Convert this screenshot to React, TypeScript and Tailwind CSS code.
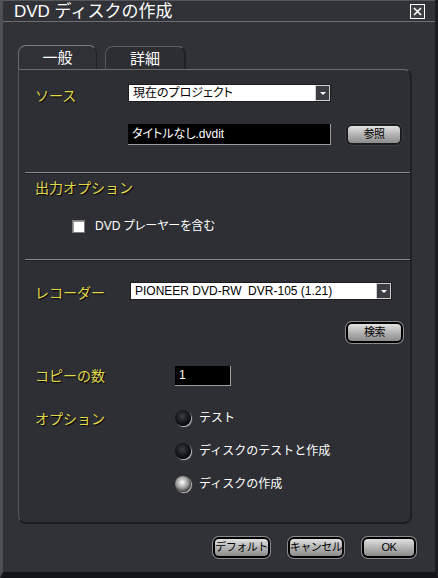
import React from "react";

function Label({ children }: { children: React.ReactNode }) {
  return (
    <span className="text-[14px] leading-none text-[#e2d84c] [text-shadow:1px_1px_1px_#000] whitespace-nowrap">
      {children}
    </span>
  );
}

function Dropdown({ text, width }: { text: string; width: string }) {
  return (
    <div className={`${width} h-[18px] flex bg-white border border-[#1c1c1c]`}>
      <span className="flex-1 pl-[4px] text-[12px] leading-[16px] text-black [font-feature-settings:'palt'] whitespace-pre overflow-hidden">
        {text}
      </span>
      <span className="w-[15px] h-[16px] bg-[#3c3d41] border border-[#d0d0d0] flex items-center justify-center">
        <span className="w-0 h-0 border-l-[3px] border-r-[3px] border-t-[3px] border-l-transparent border-r-transparent border-t-white" />
      </span>
    </div>
  );
}

function Btn({ children, width, soft }: { children: React.ReactNode; width: string; soft?: boolean }) {
  return (
    <div
      className={`${width} h-[21px] rounded-[6px] p-[2px] ${soft ? "bg-[#1c1d20] shadow-[0_0_0_1px_#3a3c40]" : "bg-black shadow-[0_0_0_1px_#8a8c90]"}`}
    >
      <div className="h-full rounded-[4px] bg-gradient-to-b from-[#e2e2e2] via-[#b4b4b4] to-[#8c8c8c] flex items-center justify-center text-[11px] leading-none text-black tracking-[-0.5px] whitespace-nowrap">
        {children}
      </div>
    </div>
  );
}

function Radio({ on, text }: { on?: boolean; text: string }) {
  return (
    <div className="flex items-center gap-[8px] h-[16px]">
      <span
        className={`w-[16px] h-[16px] rounded-full shadow-[1px_1px_1px_#c8c8c8] ${on ? "bg-[radial-gradient(circle_at_45%_40%,#ffffff,#9a9a9a_45%,#2a2a2a_80%)]" : "bg-[radial-gradient(circle_at_45%_40%,#3c3e42,#111214_55%,#050505_80%)]"}`}
      />
      <span className="text-[12px] leading-none text-white whitespace-nowrap">{text}</span>
    </div>
  );
}

export default function App() {
  return (
    <div className="w-[438px] h-[578px] bg-[#303237] overflow-hidden flex flex-col border-l-[3px] border-l-[#4e5055] border-r-[3px] border-r-[#1c1d20] border-b-[6px] border-b-[#141518] font-['Liberation_Sans','Noto_Sans_CJK_JP',sans-serif]">

      {/* TITLE */}
      <div className="h-[22px] shrink-0 flex items-center justify-between pl-[11px] pr-[10px] border-b border-b-[#6c6e73] border-t border-t-[#55575c]">
        <span className="text-[17px] leading-none text-white">DVD ディスクの作成</span>
        <span className="w-[15px] h-[15px] border border-white bg-[#3d3f43] flex items-center justify-center">
          <svg width="9" height="9" viewBox="0 0 9 9">
            <path d="M1 1 L8 8 M8 1 L1 8" stroke="#fff" strokeWidth="1.6" />
          </svg>
        </span>
      </div>

      {/* TABS */}
      <div className="mt-[23px] pl-[15px] flex gap-[8px] items-end h-[24px]">
        <div className="w-[79px] h-[24px] rounded-t-[8px] border-t border-l border-t-[#7a7c80] border-l-[#6a6c70] border-r border-r-[#1e2023] bg-[#2f3136] flex items-center justify-center text-[15px] text-white leading-none">
          一般
        </div>
        <div className="w-[81px] h-[23px] rounded-t-[8px] border-t border-l border-t-[#5e6065] border-l-[#55575c] border-r-2 border-r-[#1e2023] bg-[#2c2e32] flex items-center justify-center text-[15px] text-white leading-none">
          詳細
        </div>
      </div>

      {/* PANEL */}
      <div className="ml-[15px] w-[394px] h-[455px] rounded-[8px] rounded-tl-none bg-[#2d2f34] border border-t-[#6a6c70] border-l-[#55575c] border-r-2 border-r-[#1f2024] border-b-2 border-b-[#1c1d21] flex flex-col">

        {/* SOURCE */}
        <div className="mt-[14px] pl-[16px] flex items-center h-[18px]">
          <div className="w-[93px] pt-[6px]"><Label>ソース</Label></div>
          <Dropdown text="現在のプロジェクト" width="w-[203px]" />
        </div>

        <div className="mt-[21px] pl-[109px] flex items-center h-[22px]">
          <div className="w-[203px] h-[21px] bg-black border-b border-r border-b-[#9a9a9a] border-r-[#9a9a9a] flex items-center pl-[4px] text-[12px] text-white [font-feature-settings:'palt'] leading-none">
            タイトルなし.dvdit
          </div>
          <div className="ml-[15px]">
            <Btn width="w-[56px]" soft>参照</Btn>
          </div>
        </div>

        <div className="mt-[27px] ml-[6px] border-t border-t-[#85878c] border-b border-b-[#1e2023]" />

        {/* OUTPUT */}
        <div className="mt-[6px] pl-[16px] h-[16px] flex items-center">
          <Label>出力オプション</Label>
        </div>

        <div className="mt-[23px] pl-[53px] flex items-center gap-[10px] h-[14px]">
          <span className="w-[13px] h-[13px] bg-white border border-[#7c7c7c] shadow-[inset_1px_1px_0_#9a9a9a]" />
          <span className="text-[12px] leading-none text-white whitespace-nowrap [font-feature-settings:'palt']">DVD プレーヤーを含む</span>
        </div>

        <div className="mt-[26px] ml-[6px] border-t border-t-[#85878c] border-b border-b-[#1e2023]" />

        {/* RECORDER */}
        <div className="mt-[21px] pl-[16px] flex items-center h-[18px]">
          <div className="w-[95px] pt-[4px]"><Label>レコーダー</Label></div>
          <Dropdown text="PIONEER DVD-RW  DVR-105 (1.21)" width="w-[262px]" />
        </div>

        <div className="mt-[21px] pl-[327px] h-[23px] flex items-center">
          <Btn width="w-[57px]">検索</Btn>
        </div>

        <div className="mt-[21px] pl-[16px] flex items-center h-[21px]">
          <div className="w-[140px] pt-[1px]"><Label>コピーの数</Label></div>
          <div className="w-[56px] h-[20px] bg-black border-b border-r border-b-[#a0a0a0] border-r-[#a0a0a0] flex items-center pl-[4px] text-[12px] text-white leading-none">
            1
          </div>
        </div>

        {/* OPTIONS */}
        <div className="mt-[21px] pl-[16px] flex">
          <div className="w-[140px]"><Label>オプション</Label></div>
          <div className="pt-[3px] flex flex-col gap-[17px]">
            <Radio text="テスト" />
            <Radio text="ディスクのテストと作成" />
            <Radio text="ディスクの作成" on />
          </div>
        </div>
      </div>

      {/* FOOTER */}
      <div className="mt-[13px] flex justify-end gap-[18px] pr-[19px]">
        <Btn width="w-[57px]">デフォルト</Btn>
        <Btn width="w-[56px]">キャンセル</Btn>
        <Btn width="w-[54px]">OK</Btn>
      </div>
    </div>
  );
}
